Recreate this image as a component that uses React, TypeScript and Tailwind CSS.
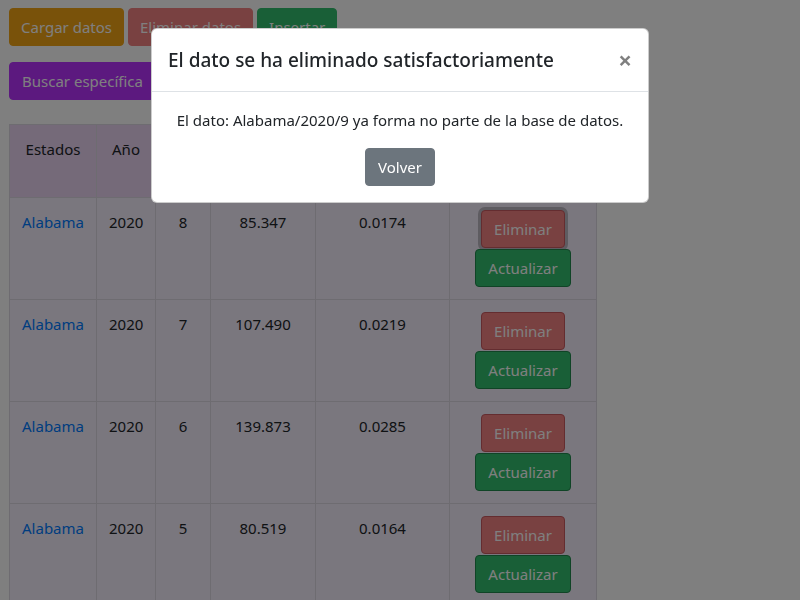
import React from 'react'

type Row = { estado: string, anio: number, semana: number, muertes: string, tasa: string }

const rows: Row[] = [
  { estado: "Alabama", anio: 2020, semana: 8, muertes: "85.347", tasa: "0.0174" },
  { estado: "Alabama", anio: 2020, semana: 7, muertes: "107.490", tasa: "0.0219" },
  { estado: "Alabama", anio: 2020, semana: 6, muertes: "139.873", tasa: "0.0285" },
  { estado: "Alabama", anio: 2020, semana: 5, muertes: "80.519", tasa: "0.0164" },
]

const btn = "h-[38px] px-3 rounded-[4px] border text-white text-[15px] leading-6"

export default function App() {
  return (
    <div className="relative h-[600px] overflow-hidden bg-white text-[#212529] font-['Noto_Sans',sans-serif] text-[15px] leading-6">
      <div className="pl-[9px] pt-[8px]">
        <div className="flex gap-[4px]">
          <button className={`${btn} px-[11px] bg-[#f2a414] border-[#f2a414]`}>Cargar datos</button>
          <button className={`${btn} px-[11px] bg-[#f28282] border-[#f28282]`}>Eliminar datos</button>
          <button className={`${btn} px-[11px] bg-[#32be6e] border-[#32be6e]`}>Insertar</button>
        </div>
        <div className="mt-[16px] flex">
          <button className={`${btn} bg-[#b832ff] border-[#b832ff]`}>Buscar específica</button>
        </div>
        <table className="mt-[24px] table-fixed border-collapse w-[587px]">
          <colgroup>
            <col className="w-[87px]" />
            <col className="w-[59px]" />
            <col className="w-[55px]" />
            <col className="w-[105px]" />
            <col className="w-[134px]" />
            <col className="w-[147px]" />
          </colgroup>
          <thead>
            <tr className="bg-[#ead4f2]">
              <th className="border border-[#dcd8e2] p-3 align-top text-center font-normal">Estados</th>
              <th className="border border-[#dcd8e2] p-3 align-top text-center font-normal">Año</th>
              <th className="border border-[#dcd8e2] p-3 align-top text-center font-normal">Sem</th>
              <th className="border border-[#dcd8e2] p-3 align-top text-center font-normal">Muertes totales</th>
              <th className="border border-[#dcd8e2] p-3 align-top text-center font-normal">Tasa de mortalidad</th>
              <th className="border border-[#dcd8e2] p-3 align-top text-center font-normal">Acciones</th>
            </tr>
          </thead>
          <tbody>
            {rows.map((r, index) => {
              return <tr key={index} className="bg-[#f4eefc]">
                <td className="border border-[#dcd8e2] p-3 align-top text-center text-[#007bff]">{r.estado}</td>
                <td className="border border-[#dcd8e2] p-3 align-top text-center">{r.anio}</td>
                <td className="border border-[#dcd8e2] p-3 align-top text-center">{r.semana}</td>
                <td className="border border-[#dcd8e2] p-3 align-top text-center">{r.muertes}</td>
                <td className="border border-[#dcd8e2] p-3 align-top text-center">{r.tasa}</td>
                <td className="border border-[#dcd8e2] p-3 align-top">
                  <div className="flex flex-col items-center gap-[1px]">
                    <button className={`${btn} bg-[#f28282] border-[#c85a60] ${index === 0 ? "ring-[3px] ring-[#bcb8c2]" : ""}`}>Eliminar</button>
                    <button className={`${btn} bg-[#32be6e] border-[#20884c]`}>Actualizar</button>
                  </div>
                </td>
              </tr>
            })}
          </tbody>
        </table>
      </div>

      <div className="fixed inset-0 bg-black/50">
        <div className="mx-auto mt-[28px] w-[498px] bg-white rounded-[6px] border border-black/20">
          <div className="flex items-start justify-between p-4 border-b border-[#dee2e6]">
            <h5 className="text-[19px] leading-[30px] font-medium">El dato se ha eliminado satisfactoriamente</h5>
            <button className="text-2xl font-bold leading-[30px] text-black/50">×</button>
          </div>
          <div className="p-4 flex flex-col items-center">
            <p className="leading-6">El dato: Alabama/2020/9 ya forma no parte de la base de datos.</p>
            <button className={`${btn} mt-4 bg-[#6c757d] border-[#6c757d]`}>Volver</button>
          </div>
        </div>
      </div>
    </div>
  )
}
